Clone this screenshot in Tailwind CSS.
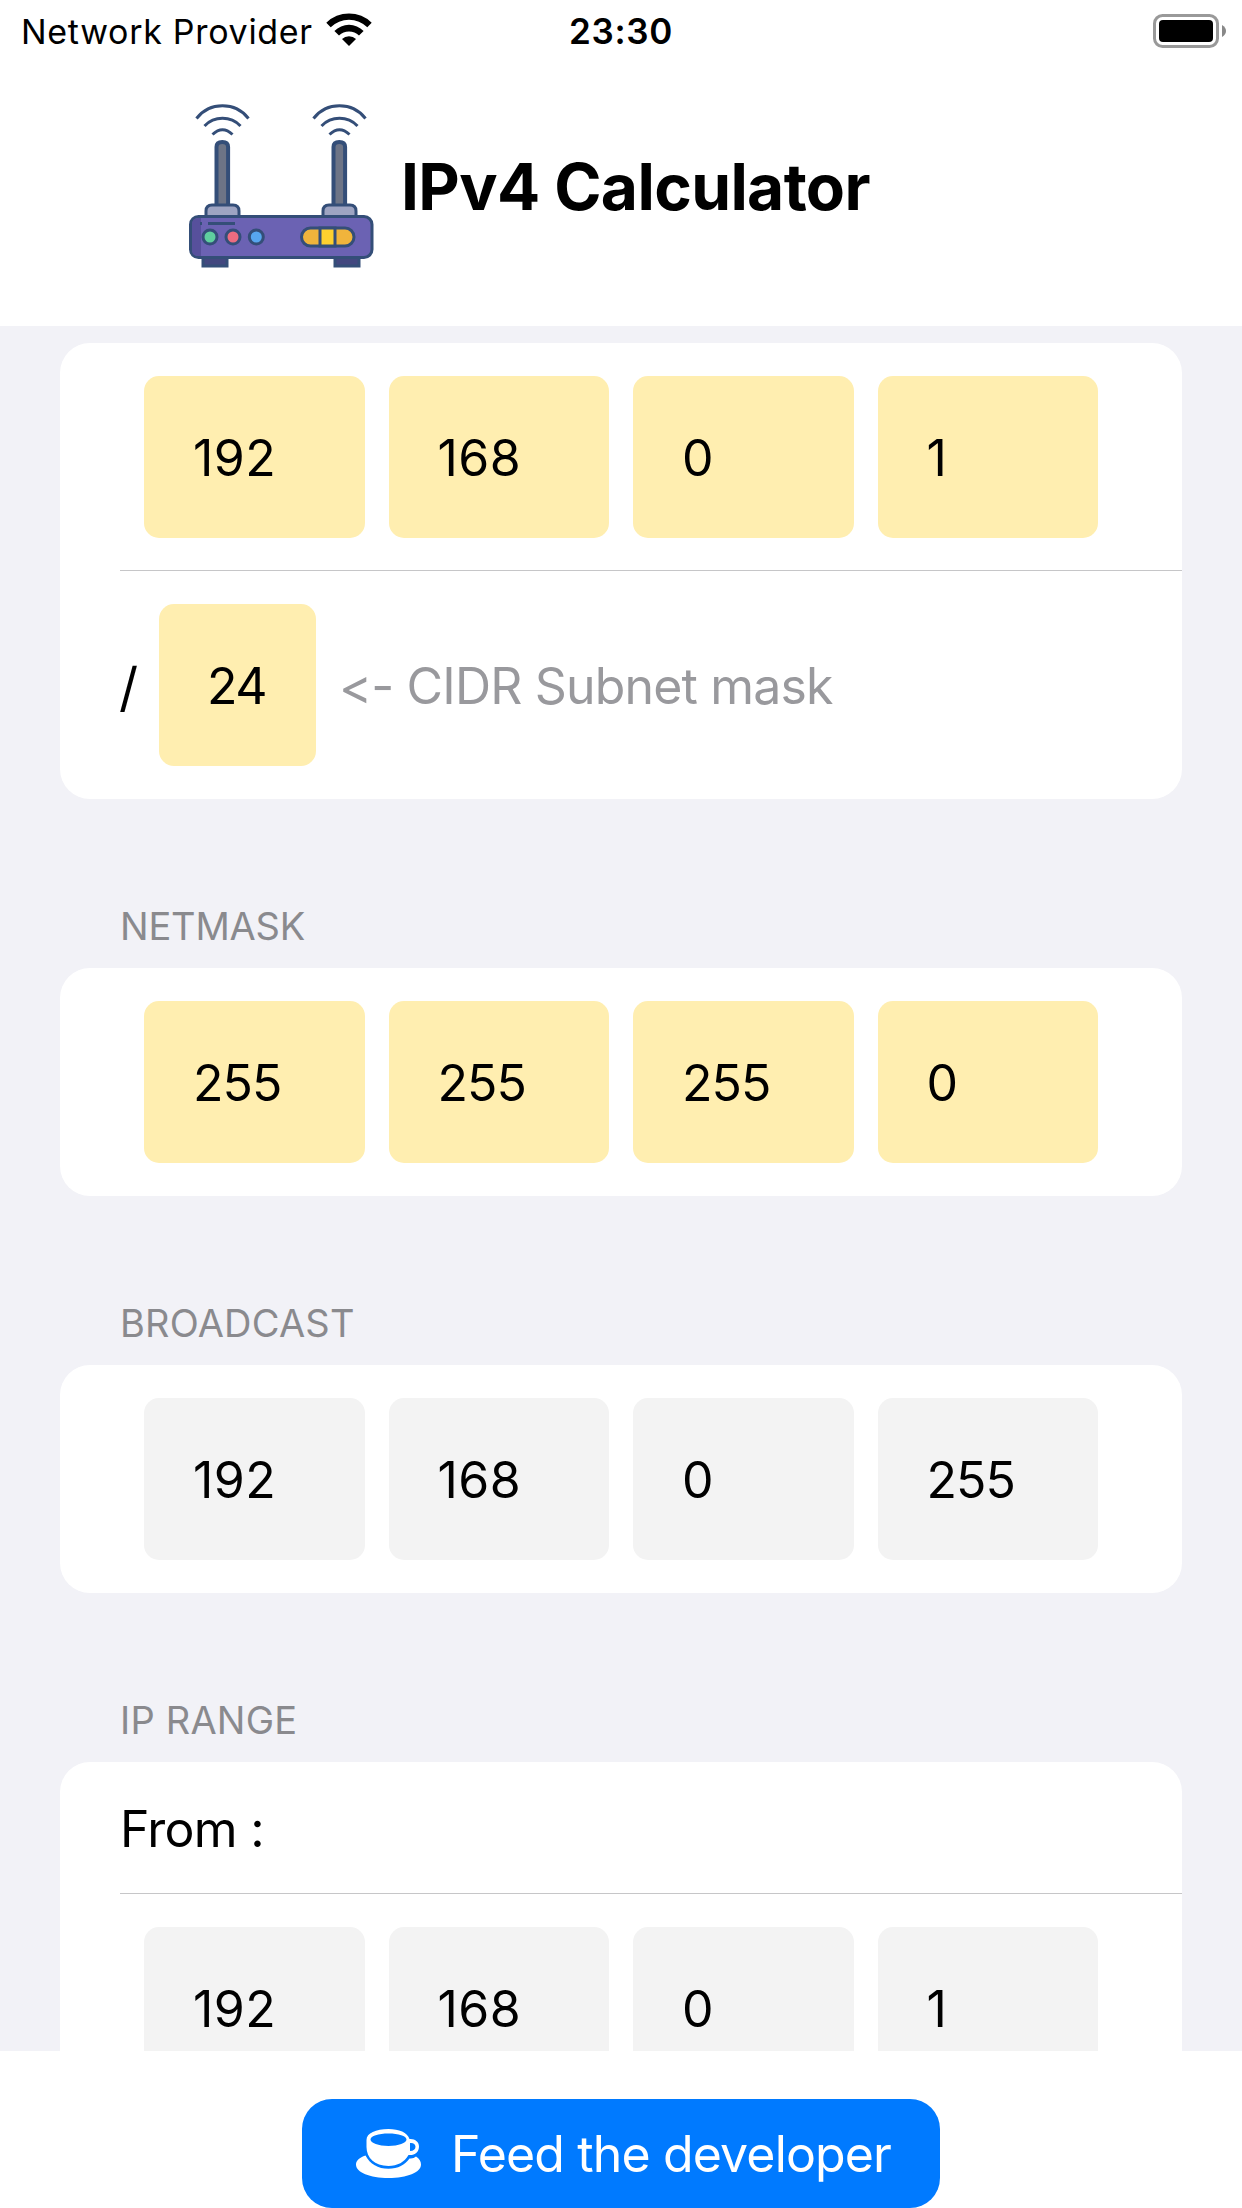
<!DOCTYPE html>
<html lang="en">
<head>
    <meta charset="UTF-8">
    <meta name="viewport" content="width=device-width, initial-scale=1.0">
    <title>IPv4 Calculator</title>
    <script src="https://cdn.jsdelivr.net/npm/@tailwindcss/browser@4"></script>
</head>
<body class="w-[1242px] h-[2208px] overflow-hidden flex flex-col bg-white text-black font-['Inter',sans-serif] text-[50px] leading-[60px]">
    <!-- Status bar -->
    <div class="h-[62px] shrink-0 grid grid-cols-[1fr_auto_1fr] items-center pl-[16px] pr-4">
        <div class="flex items-center pl-[5px] text-[34px] leading-none">
            <span class="pt-px tracking-[0.7px]">Network Provider</span>
            <svg class="ml-[13px] -mt-[3px]" width="46" height="34" viewBox="0 0 46 34">
                <path d="M0.3 9.8a32.2 32.2 0 0 1 45.4 0l-4.4 4.4a26 26 0 0 0-36.6 0z"/>
                <path d="M8.4 17.9a20.7 20.7 0 0 1 29.2 0l-4.6 4.6a14.2 14.2 0 0 0-20 0z"/>
                <path d="M16 26a10 10 0 0 1 14 0l-7 7z"/>
            </svg>
        </div>
        <span class="pt-px text-[35px] leading-none font-semibold tracking-[0.7px]">23:30</span>
        <svg class="justify-self-end -mt-px" width="73" height="34" viewBox="0 0 73 34">
            <rect x="1.5" y="1.5" width="63" height="31" rx="8" fill="none" stroke="#999" stroke-width="3"/>
            <rect x="6" y="6" width="54" height="22" rx="4"/>
            <path d="M69 11q4 2.500 4 6t-4 6z" fill="#888"/>
        </svg>
    </div>

    <!-- Title -->
    <header class="h-[264px] shrink-0 flex items-start pt-7 pl-[170px]">
        <svg class="shrink-0 blur-[0.6px]" width="220" height="190" viewBox="0 0 220 190" fill="none" stroke="#344e78" stroke-width="3">
            <g id="antenna">
                <path d="M26.500 28.500a33 33 0 0 1 52 0M34.500 36a25 25 0 0 1 36 0M42.500 44.500q10-9.500 20 0"/>
                <path d="M46.500 116V57q0-5 5.800-5t5.800 5v59z" fill="#6d7486" stroke-width="4"/>
                <path d="M36 128v-7q0-6 6-6h21q6 0 6 6v7z" fill="#9ea4c2"/>
            </g>
            <use href="#antenna" x="117"/>
            <path d="M33 176v-10h24v10zM165 176v-10h24v10z" fill="#42477f"/>
            <rect x="20.500" y="126.500" width="181.500" height="41" rx="8" fill="#6b62b3"/>
            <path d="M31 128h-3q-6 0-6 6v26q0 6 6 6h3z" fill="#57509c" stroke="none"/>
            <path d="M30 133.500h2M38 133.500h27"/>
            <circle cx="40" cy="147" r="7" fill="#5fcf9f"/>
            <circle cx="63" cy="147" r="7" fill="#ec6c80"/>
            <circle cx="86.300" cy="147" r="7" fill="#57a6ef"/>
            <rect x="131.500" y="138" width="52.500" height="18" rx="9" fill="#f0b43c"/>
            <path d="M150 138h15v18h-15z" fill="#fdd02f"/>
        </svg>
        <h1 class="ml-[11px] mt-[57px] text-[64px] leading-[80px] font-bold tracking-[-0.62px]">IPv4 Calculator</h1>
    </header>

    <main class="h-[1725px] shrink-0 overflow-hidden bg-[#f2f2f7] px-[60px] pt-[17px]">
        <!-- IP address and CIDR -->
        <section class="h-[456px] rounded-[30px] bg-white">
            <div class="flex gap-6 pl-[84px] pr-[84px] py-[33px]">
                <div class="flex-1 h-[162px] rounded-[15px] bg-[#ffeeb0] pl-[49px] pt-0.5 flex items-center tracking-[0.5px]">192</div>
                <div class="flex-1 h-[162px] rounded-[15px] bg-[#ffeeb0] pl-[49px] pt-0.5 flex items-center tracking-[0.5px]">168</div>
                <div class="flex-1 h-[162px] rounded-[15px] bg-[#ffeeb0] pl-[49px] pt-0.5 flex items-center">0</div>
                <div class="flex-1 h-[162px] rounded-[15px] bg-[#ffeeb0] pl-[49px] pt-0.5 flex items-center">1</div>
            </div>
            <div class="ml-[60px] -mt-px h-px bg-[#c6c6c8]"></div>
            <div class="flex items-center pl-[60px] py-[33px]">
                <span class="w-[39px] -ml-px mr-px pt-1 text-[53px]">/</span>
                <div class="w-[157px] h-[162px] rounded-[15px] bg-[#ffeeb0] pl-12 pt-0.5 flex items-center tracking-[-1.500px]">24</div>
                <span class="ml-[23px] pt-0.5 text-[#99999d] tracking-[-0.84px]">&lt;- CIDR Subnet mask</span>
            </div>
        </section>

        <h2 class="ml-[60px] mt-[102px] mb-[17px] text-[38px] leading-[50px] text-[#8a8a8e] tracking-[-0.2px]">NETMASK</h2>
        <section class="flex gap-6 h-[228px] rounded-[30px] bg-white px-[84px] py-[33px]">
            <div class="flex-1 rounded-[15px] bg-[#ffeeb0] pl-[49px] pt-0.5 flex items-center tracking-[-0.900px]">255</div>
            <div class="flex-1 rounded-[15px] bg-[#ffeeb0] pl-[49px] pt-0.5 flex items-center tracking-[-0.900px]">255</div>
            <div class="flex-1 rounded-[15px] bg-[#ffeeb0] pl-[49px] pt-0.5 flex items-center tracking-[-0.900px]">255</div>
            <div class="flex-1 rounded-[15px] bg-[#ffeeb0] pl-[49px] pt-0.5 flex items-center">0</div>
        </section>

        <h2 class="ml-[60px] mt-[102px] mb-[17px] text-[38px] leading-[50px] text-[#8a8a8e] tracking-[0.2px]">BROADCAST</h2>
        <section class="flex gap-6 h-[228px] rounded-[30px] bg-white px-[84px] py-[33px]">
            <div class="flex-1 rounded-[15px] bg-[#f3f3f3] pl-[49px] pt-0.5 flex items-center tracking-[0.5px]">192</div>
            <div class="flex-1 rounded-[15px] bg-[#f3f3f3] pl-[49px] pt-0.5 flex items-center tracking-[0.5px]">168</div>
            <div class="flex-1 rounded-[15px] bg-[#f3f3f3] pl-[49px] pt-0.5 flex items-center">0</div>
            <div class="flex-1 rounded-[15px] bg-[#f3f3f3] pl-[49px] pt-0.5 flex items-center tracking-[-0.900px]">255</div>
        </section>

        <h2 class="ml-[60px] mt-[102px] mb-[17px] text-[38px] leading-[50px] text-[#8a8a8e] tracking-[0.2px]">IP RANGE</h2>
        <section class="rounded-[30px] bg-white">
            <div class="h-[131px] pl-[60px] pt-0.5 flex items-center tracking-[-0.74px]">From :</div>
            <div class="ml-[60px] h-px bg-[#c6c6c8]"></div>
            <div class="flex gap-6 px-[84px] py-[33px]">
                <div class="flex-1 h-[162px] rounded-[15px] bg-[#f3f3f3] pl-[49px] pt-0.5 flex items-center tracking-[0.5px]">192</div>
                <div class="flex-1 h-[162px] rounded-[15px] bg-[#f3f3f3] pl-[49px] pt-0.5 flex items-center tracking-[0.5px]">168</div>
                <div class="flex-1 h-[162px] rounded-[15px] bg-[#f3f3f3] pl-[49px] pt-0.5 flex items-center">0</div>
                <div class="flex-1 h-[162px] rounded-[15px] bg-[#f3f3f3] pl-[49px] pt-0.5 flex items-center">1</div>
            </div>
        </section>
    </main>

    <!-- Donate button -->
    <footer class="h-[157px] shrink-0 pt-12 flex justify-center">
        <button class="w-[638px] h-[109px] rounded-[30px] bg-[#007aff] text-white flex items-center pl-[54px] whitespace-nowrap">
            <svg class="shrink-0" width="65" height="49" viewBox="0 0 65 49" fill="#fff">
                <path fill-rule="evenodd" d="M10.500 11C10.500 4 20 0 32.500 0C43 0 51.500 3.500 53.500 10C59 9.500 63 13 63 17.500C63 23 59 26.500 52.500 26C48.500 33 41.500 37 32.500 37C18.500 37 10.500 28.500 10.500 18zM14.500 10.500C14.500 14 22.500 17 32.500 17S50.500 14 50.500 10.500S42.500 4.500 32.500 4.500S14.500 7 14.500 10.500zM54 14V22C57.500 22 59.500 20.500 59.500 17.800C59.500 15 57 13.500 54 14z"/>
                <path d="M9.500 26.500C14 35 22 39.800 32.500 39.800C42 39.800 49 36 53.500 29.500Q57.500 30 60 27.500C63.500 29.500 65 32.500 65 35.500C65 43.500 51 49 32.500 49S0 43.500 0 35.500C0 31.500 3.500 28.500 9.500 26.500z"/>
            </svg>
            <span class="ml-[30px] tracking-[-0.85px]">Feed the developer</span>
        </button>
    </footer>
</body>
</html>
